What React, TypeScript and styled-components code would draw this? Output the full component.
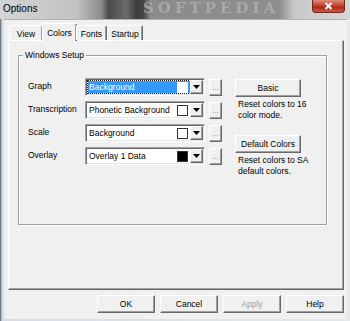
import React from 'react'
import styled, { createGlobalStyle } from 'styled-components'

const GlobalStyle = createGlobalStyle`
  html, body {
    margin: 0;
    padding: 0;
    background: #d9d9d9;
  }
  body {
    font-family: "Liberation Sans", Arial, sans-serif;
    font-size: 8.5px;
    color: #000;
  }
`

const rows = [
  { label: 'Graph', value: 'Background', swatch: '#fff', selected: true },
  { label: 'Transcription', value: 'Phonetic Background', swatch: '#fff' },
  { label: 'Scale', value: 'Background', swatch: '#fff' },
  { label: 'Overlay', value: 'Overlay 1 Data', swatch: '#000' },
]

const tabs = [
  { name: 'View', width: 34 },
  { name: 'Colors', width: 33, active: true },
  { name: 'Fonts', width: 31 },
  { name: 'Startup', width: 36 },
]

const ColorRow = ({ label, value, swatch, selected }: any) => {
  return (
    <>
      <RowLabel>{label}</RowLabel>
      <Combo>
        <ComboField selected={selected}>
          <ComboText>{value}</ComboText>
          <Swatch color={swatch} selected={selected} />
        </ComboField>
        <DropButton>
          <svg width="7" height="4" viewBox="0 0 7 4">
            <path d="M0 0h7L3.5 4z" fill="#000" />
          </svg>
        </DropButton>
      </Combo>
      <DotsButton>...</DotsButton>
    </>
  )
}

export default function App() {
  return (
    <Window>
      <GlobalStyle />
      <TitleBar>
        <Title>Options</Title>
        <Watermark>SOFTPEDIA</Watermark>
        <CloseButton>
          <svg width="9" height="8" viewBox="0 0 9 8">
            <path d="M1.5 1l6 6M7.5 1l-6 6" stroke="#fff" strokeWidth="2" />
          </svg>
        </CloseButton>
      </TitleBar>
      <Client>
        <TabStrip>
          {tabs.map((t) => (
            <Tab key={t.name} active={t.active} w={t.width}>
              {t.name}
            </Tab>
          ))}
        </TabStrip>
        <TabPanel>
          <GroupBox>
            <Legend>Windows Setup</Legend>
            <GroupBody>
              <ColorGrid>
                {rows.map((r) => (
                  <ColorRow key={r.label} {...r} />
                ))}
              </ColorGrid>
              <SideColumn>
                <PushButton w={66}>Basic</PushButton>
                <Hint>
                  Reset colors to 16
                  <br />
                  color mode.
                </Hint>
                <PushButton w={66} style={{ marginTop: 14 }}>
                  Default Colors
                </PushButton>
                <Hint>
                  Reset colors to SA
                  <br />
                  default colors.
                </Hint>
              </SideColumn>
            </GroupBody>
          </GroupBox>
        </TabPanel>
        <ButtonRow>
          <PushButton w={58}>OK</PushButton>
          <PushButton w={58}>Cancel</PushButton>
          <PushButton w={58} disabled>
            Apply
          </PushButton>
          <PushButton w={58}>Help</PushButton>
        </ButtonRow>
      </Client>
    </Window>
  )
}

const Window = styled.div`
  width: 350px;
  height: 321px;
  box-sizing: border-box;
  display: flex;
  flex-direction: column;
  padding: 0 3px 2px 3px;
  background: linear-gradient(to right, #8d9aa8 0, #d6dde5 1px, #d6dde5 2px, #e4e8ec 100%);
  border-left: 1px solid #6f7b88;
`
const TitleBar = styled.div`
  height: 19px;
  margin: 0 -3px 0 -4px;
  padding: 0 5px 0 3px;
  display: flex;
  align-items: flex-start;
  overflow: hidden;
  background: linear-gradient(
    to right,
    #d4d4d4 0,
    #c2c2c2 22%,
    #8a8a8a 29%,
    #4a4a4a 31%,
    #6b6b6b 36%,
    #3d3d3d 39%,
    #454545 41%,
    #8b8b8b 43%,
    #8e8e8e 80%,
    #c9c9c9 84%,
    #d6d6d6 100%
  );
`
const Title = styled.div`
  font-size: 10px;
  line-height: 17px;
  color: #000;
  width: 140px;
`
const Watermark = styled.div`
  flex: 1;
  font-family: "DejaVu Serif", "Liberation Serif", serif;
  font-weight: bold;
  font-size: 15px;
  letter-spacing: 4px;
  line-height: 16px;
  color: #b8b8b8;
  opacity: 0.65;
  filter: blur(0.6px);
  white-space: nowrap;
  overflow: hidden;
`
const CloseButton = styled.div`
  flex: none;
  width: 33px;
  height: 13px;
  box-sizing: border-box;
  display: flex;
  align-items: center;
  justify-content: center;
  background: linear-gradient(#e08a7a, #c7432f 45%, #b02a17 60%, #c85a44);
  border: 1px solid #6b2a20;
  border-top: none;
  border-radius: 0 0 4px 4px;
`
const Client = styled.div`
  flex: 1;
  display: flex;
  flex-direction: column;
  background: #f0f0f0;
  border-top: 1px solid #a9b3be;
  padding: 3px 3px 5px 4px;
`
const TabStrip = styled.div`
  display: flex;
  align-items: flex-end;
  height: 17px;
  padding-left: 1px;
  position: relative;
  z-index: 1;
`
const Tab = styled.div<{ active?: boolean; w: number }>`
  box-sizing: border-box;
  width: ${({ w, active }) => (active ? w + 2 : w)}px;
  height: ${({ active }) => (active ? 18 : 15)}px;
  margin: ${({ active }) => (active ? '0 -1px -1px -1px' : '0')};
  display: flex;
  align-items: center;
  justify-content: center;
  padding-top: ${({ active }) => (active ? 0 : 1)}px;
  background: #f0f0f0;
  border-top: 1px solid #fff;
  border-left: 1px solid #fff;
  border-right: 1px solid #696969;
  box-shadow: inset -1px 0 0 #a0a0a0;
  border-radius: 2px 2px 0 0;
`
const TabPanel = styled.div`
  height: 250px;
  box-sizing: border-box;
  border-top: 1px solid #fff;
  border-left: 1px solid #fff;
  border-right: 1px solid #696969;
  border-bottom: 1px solid #696969;
  box-shadow: inset -1px -1px 0 #a0a0a0;
  padding: 14px 16px 0 9px;
`
const GroupBox = styled.div`
  position: relative;
  height: 170px;
  box-sizing: border-box;
  border: 1px solid #a0a0a0;
  box-shadow: inset 1px 1px 0 #fff, 1px 1px 0 #fff;
  padding: 22px 0 0 8px;
`
const Legend = styled.div`
  position: absolute;
  top: -6px;
  left: 4px;
  padding: 0 2px;
  background: #f0f0f0;
  line-height: 11px;
`
const GroupBody = styled.div`
  display: flex;
  align-items: flex-start;
`
const ColorGrid = styled.div`
  display: grid;
  grid-template-columns: 54px 120px 13px;
  grid-auto-rows: 18px;
  column-gap: 4px;
  row-gap: 5px;
  align-items: center;
`
const RowLabel = styled.div`
  padding-left: 1px;
  margin-top: -2px;
  white-space: nowrap;
`
const Combo = styled.div`
  height: 18px;
  box-sizing: border-box;
  display: flex;
  align-items: stretch;
  background: #fff;
  border-top: 1px solid #a0a0a0;
  border-left: 1px solid #a0a0a0;
  border-right: 1px solid #fff;
  border-bottom: 1px solid #fff;
  box-shadow: inset 1px 1px 0 #696969, inset -1px -1px 0 #e3e3e3;
  padding: 2px;
`
const ComboField = styled.div<{ selected?: boolean }>`
  flex: 1;
  display: flex;
  align-items: center;
  padding: 0 2px 0 1px;
  background: ${({ selected }) => (selected ? '#3399ff' : 'transparent')};
  color: ${({ selected }) => (selected ? '#fff' : '#000')};
  outline: ${({ selected }) => (selected ? '1px dotted #1a1a1a' : 'none')};
`
const ComboText = styled.span`
  flex: 1;
  white-space: nowrap;
  overflow: hidden;
`
const Swatch = styled.span<{ color: string; selected?: boolean }>`
  flex: none;
  width: 11px;
  height: 11px;
  box-sizing: border-box;
  background: ${({ color }) => color};
  border: 1px solid ${({ selected }) => (selected ? '#fff' : '#333')};
`
const DropButton = styled.div`
  width: 13px;
  flex: none;
  box-sizing: border-box;
  display: flex;
  align-items: center;
  justify-content: center;
  background: #f0f0f0;
  border-top: 1px solid #fff;
  border-left: 1px solid #fff;
  border-right: 1px solid #696969;
  border-bottom: 1px solid #696969;
  box-shadow: inset -1px -1px 0 #a0a0a0;
  margin: -1px -1px -1px 0;
`
const DotsButton = styled.div`
  height: 17px;
  box-sizing: border-box;
  display: flex;
  align-items: center;
  justify-content: center;
  color: #8a8a8a;
  font-size: 8px;
  background: #f0f0f0;
  border-top: 1px solid #fff;
  border-left: 1px solid #fff;
  border-right: 1px solid #696969;
  border-bottom: 1px solid #696969;
  box-shadow: inset -1px -1px 0 #a0a0a0;
`
const SideColumn = styled.div`
  margin-left: 13px;
  display: flex;
  flex-direction: column;
  align-items: flex-start;
  padding-top: 1px;
`
const PushButton = styled.div<{ w: number; disabled?: boolean }>`
  width: ${({ w }) => w}px;
  height: 18px;
  box-sizing: border-box;
  display: flex;
  align-items: center;
  justify-content: center;
  background: #f0f0f0;
  color: ${({ disabled }) => (disabled ? '#a0a0a0' : '#000')};
  border-top: 1px solid #fff;
  border-left: 1px solid #fff;
  border-right: 1px solid #696969;
  border-bottom: 1px solid #696969;
  box-shadow: inset -1px -1px 0 #a0a0a0;
  white-space: nowrap;
`
const Hint = styled.div`
  margin-top: 2px;
  padding-left: 3px;
  line-height: 11px;
`
const ButtonRow = styled.div`
  display: flex;
  justify-content: flex-end;
  gap: 5px;
  margin-top: 5px;
`
